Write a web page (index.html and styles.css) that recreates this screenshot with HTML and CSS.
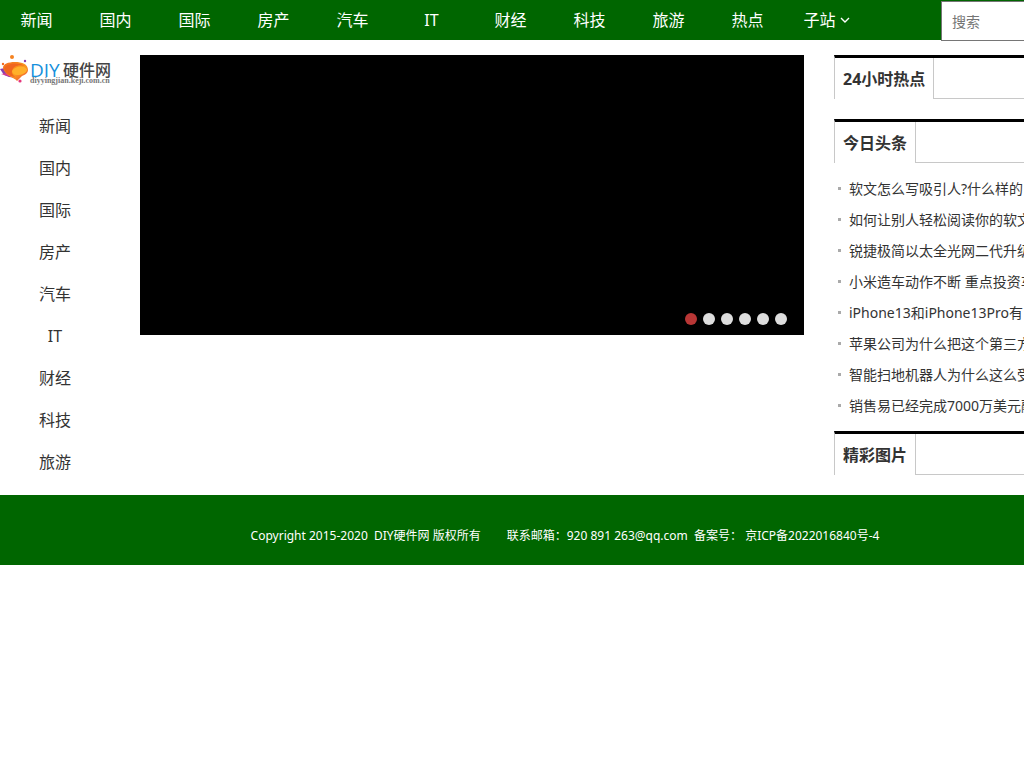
FILE: index.html
```html
<!DOCTYPE html>
<html lang="zh-CN">
<head>
<meta charset="utf-8">
<title>DIY硬件网</title>
<link rel="stylesheet" href="styles.css">
</head>
<body>
<div class="page">
  <header class="topbar">
    <nav class="topnav">
      <a href="#">新闻</a><a href="#">国内</a><a href="#">国际</a><a href="#">房产</a><a href="#">汽车</a><a href="#">IT</a><a href="#">财经</a><a href="#">科技</a><a href="#">旅游</a><a href="#">热点</a>
      <a href="#">子站 <svg class="caret" viewBox="0 0 10 6" aria-hidden="true"><path d="M1 1l4 4 4-4"/></svg></a>
    </nav>
    <form class="search"><input type="text" placeholder="搜索" aria-label="搜索"></form>
  </header>
  <main class="content">
    <aside class="side">
      <a class="logo" href="#" aria-label="DIY硬件网">
        <svg viewBox="0 0 112 30" aria-hidden="true">
          <defs>
            <linearGradient id="flame" x1="0" y1="0" x2="1" y2="1"><stop offset="0" stop-color="#f36b21"/><stop offset=".55" stop-color="#fa9a1c"/><stop offset="1" stop-color="#f04a3c"/></linearGradient>
          </defs>
          <path d="M0 14l5-1 7 5 6 7c-3-2-6-3-9-3l-5-2z" fill="#8a3fae"/>
          <path d="M1 19l7-1 8 5-5-1z" fill="#d83a8c"/>
          <path d="M3 13C3 9 8 7 15 7c7 0 13 2 13 8 0 3-3 5-6 6l-5 5C14 22 5 21 3 13z" fill="url(#flame)"/>
          <path d="M4 13c3-5 15-6 21-2-6-2-12 0-13 5-1 2 1 4 3 6-6-1-10-4-11-9z" fill="#f0661f"/>
          <path d="M12 16c3-5 11-6 15-2 0 4-5 6-10 6-3 0-5-2-5-4z" fill="#ffb02a"/>
          <circle cx="12" cy="2" r="2" fill="#f58220"/>
          <circle cx="25" cy="6" r="1.2" fill="#8a3fae"/>
          <circle cx="3" cy="9" r="1.2" fill="#f36b21"/>
          <circle cx="20" cy="26" r="1.6" fill="#e5357c"/>
          <text class="logo-diy" x="30" y="22">DIY</text>
          <text class="logo-name" x="63" y="21">硬件网</text>
          <text class="logo-url" x="30" y="28">diyyingjian.keji.com.cn</text>
        </svg>
      </a>
      <nav class="sidenav">
        <a href="#">新闻</a><a href="#">国内</a><a href="#">国际</a><a href="#">房产</a><a href="#">汽车</a><a href="#">IT</a><a href="#">财经</a><a href="#">科技</a><a href="#">旅游</a>
      </nav>
    </aside>
    <section class="slider" aria-label="焦点图">
      <div class="dots">
        <button class="dot active" aria-label="1"></button><button class="dot" aria-label="2"></button><button class="dot" aria-label="3"></button><button class="dot" aria-label="4"></button><button class="dot" aria-label="5"></button><button class="dot" aria-label="6"></button>
      </div>
    </section>
    <div class="panels">
      <section class="panel"><div class="panel-head"><h2>24小时热点</h2></div></section>
      <section class="panel headlines">
        <div class="panel-head"><h2>今日头条</h2></div>
        <ul class="news">
          <li><a href="#">软文怎么写吸引人?什么样的</a></li>
          <li><a href="#">如何让别人轻松阅读你的软文</a></li>
          <li><a href="#">锐捷极简以太全光网二代升级</a></li>
          <li><a href="#">小米造车动作不断 重点投资车</a></li>
          <li><a href="#">iPhone13和iPhone13Pro有</a></li>
          <li><a href="#">苹果公司为什么把这个第三方</a></li>
          <li><a href="#">智能扫地机器人为什么这么受</a></li>
          <li><a href="#">销售易已经完成7000万美元融</a></li>
        </ul>
      </section>
      <section class="panel"><div class="panel-head"><h2>精彩图片</h2></div></section>
    </div>
  </main>
  <footer class="footer">
    <p><span>Copyright 2015-2020&nbsp; DIY硬件网 版权所有</span><span>联系邮箱：920 891 263@qq.com&nbsp; 备案号： 京ICP备2022016840号-4</span></p>
  </footer>
</div>
</body>
</html>
```
FILE: styles.css
```css
* { box-sizing: border-box; margin: 0; padding: 0; }
html { overflow-x: hidden; }
body {
  overflow-x: hidden;
  background: #fff;
  color: #333;
  font-family: "Noto Sans", "Noto Sans CJK SC", sans-serif;
  font-size: 14px;
}
a { color: inherit; text-decoration: none; }
ul { list-style: none; }
.page { min-width: 1130px; }

.topbar {
  display: flex;
  align-items: flex-start;
  justify-content: space-between;
  height: 40px;
  background: #060;
}
.topnav { display: flex; gap: 6px; }
.topnav a {
  width: 73px;
  color: #fff;
  font-size: 16px;
  line-height: 40px;
  text-align: center;
  white-space: nowrap;
}
.caret {
  width: 10px;
  height: 6px;
  vertical-align: 3px;
  fill: none;
  stroke: #fff;
  stroke-width: 1.4;
}
.search { padding-top: 1px; }
.search input {
  display: block;
  width: 189px;
  height: 40px;
  padding: 0 10px;
  border: 1px solid #767676;
  background: #fff;
  color: #333;
  font: inherit;
}
.search input::placeholder { color: #757575; }

.content {
  display: grid;
  grid-template-columns: 110px minmax(664px, 1fr) 296px;
  column-gap: 30px;
  align-items: start;
  padding: 15px 0 12px;
}
.logo { display: block; }
.logo svg { display: block; width: 112px; height: 30px; }
.logo-diy { font: 19px "Open Sans", sans-serif; fill: #1590dc; }
.logo-name { font: 500 16px "Noto Sans CJK SC", sans-serif; fill: #444; }
.logo-url { font: bold 8px "Liberation Serif", serif; fill: #777; }
.sidenav { display: grid; padding-top: 20px; }
.sidenav a { font-size: 16px; line-height: 42px; text-align: center; }

.slider {
  display: flex;
  align-items: flex-end;
  justify-content: flex-end;
  height: 280px;
  padding: 10px 17px;
  background: #000;
}
.dots { display: flex; gap: 6px; }
.dot {
  width: 12px;
  height: 12px;
  border: 0;
  border-radius: 50%;
  background: #ddd;
}
.dot.active { background: #b83635; }

.panels { display: grid; }
.headlines { padding: 20px 0 10px; }
.panel-head {
  display: flex;
  height: 44px;
  border-top: 3px solid #000;
  border-left: 1px solid #c8c8c8;
}
.panel-head::after {
  content: "";
  flex: 1;
  border-bottom: 1px solid #c8c8c8;
}
.panel-head h2 {
  height: 41px;
  padding: 0 8px;
  border-right: 1px solid #c8c8c8;
  font-size: 16px;
  line-height: 43px;
}
.news { padding-top: 10px; }
.news li {
  display: flex;
  align-items: center;
  gap: 8px;
  padding-left: 4px;
  line-height: 31px;
  white-space: nowrap;
}
.news li::before {
  content: "";
  width: 3px;
  height: 3px;
  background: #aaa;
}

.footer {
  padding: 26px 0 14px;
  background: #060;
  color: #fff;
  font-size: 12px;
  line-height: 30px;
}
.footer p { display: flex; justify-content: center; gap: 26px; }
```
